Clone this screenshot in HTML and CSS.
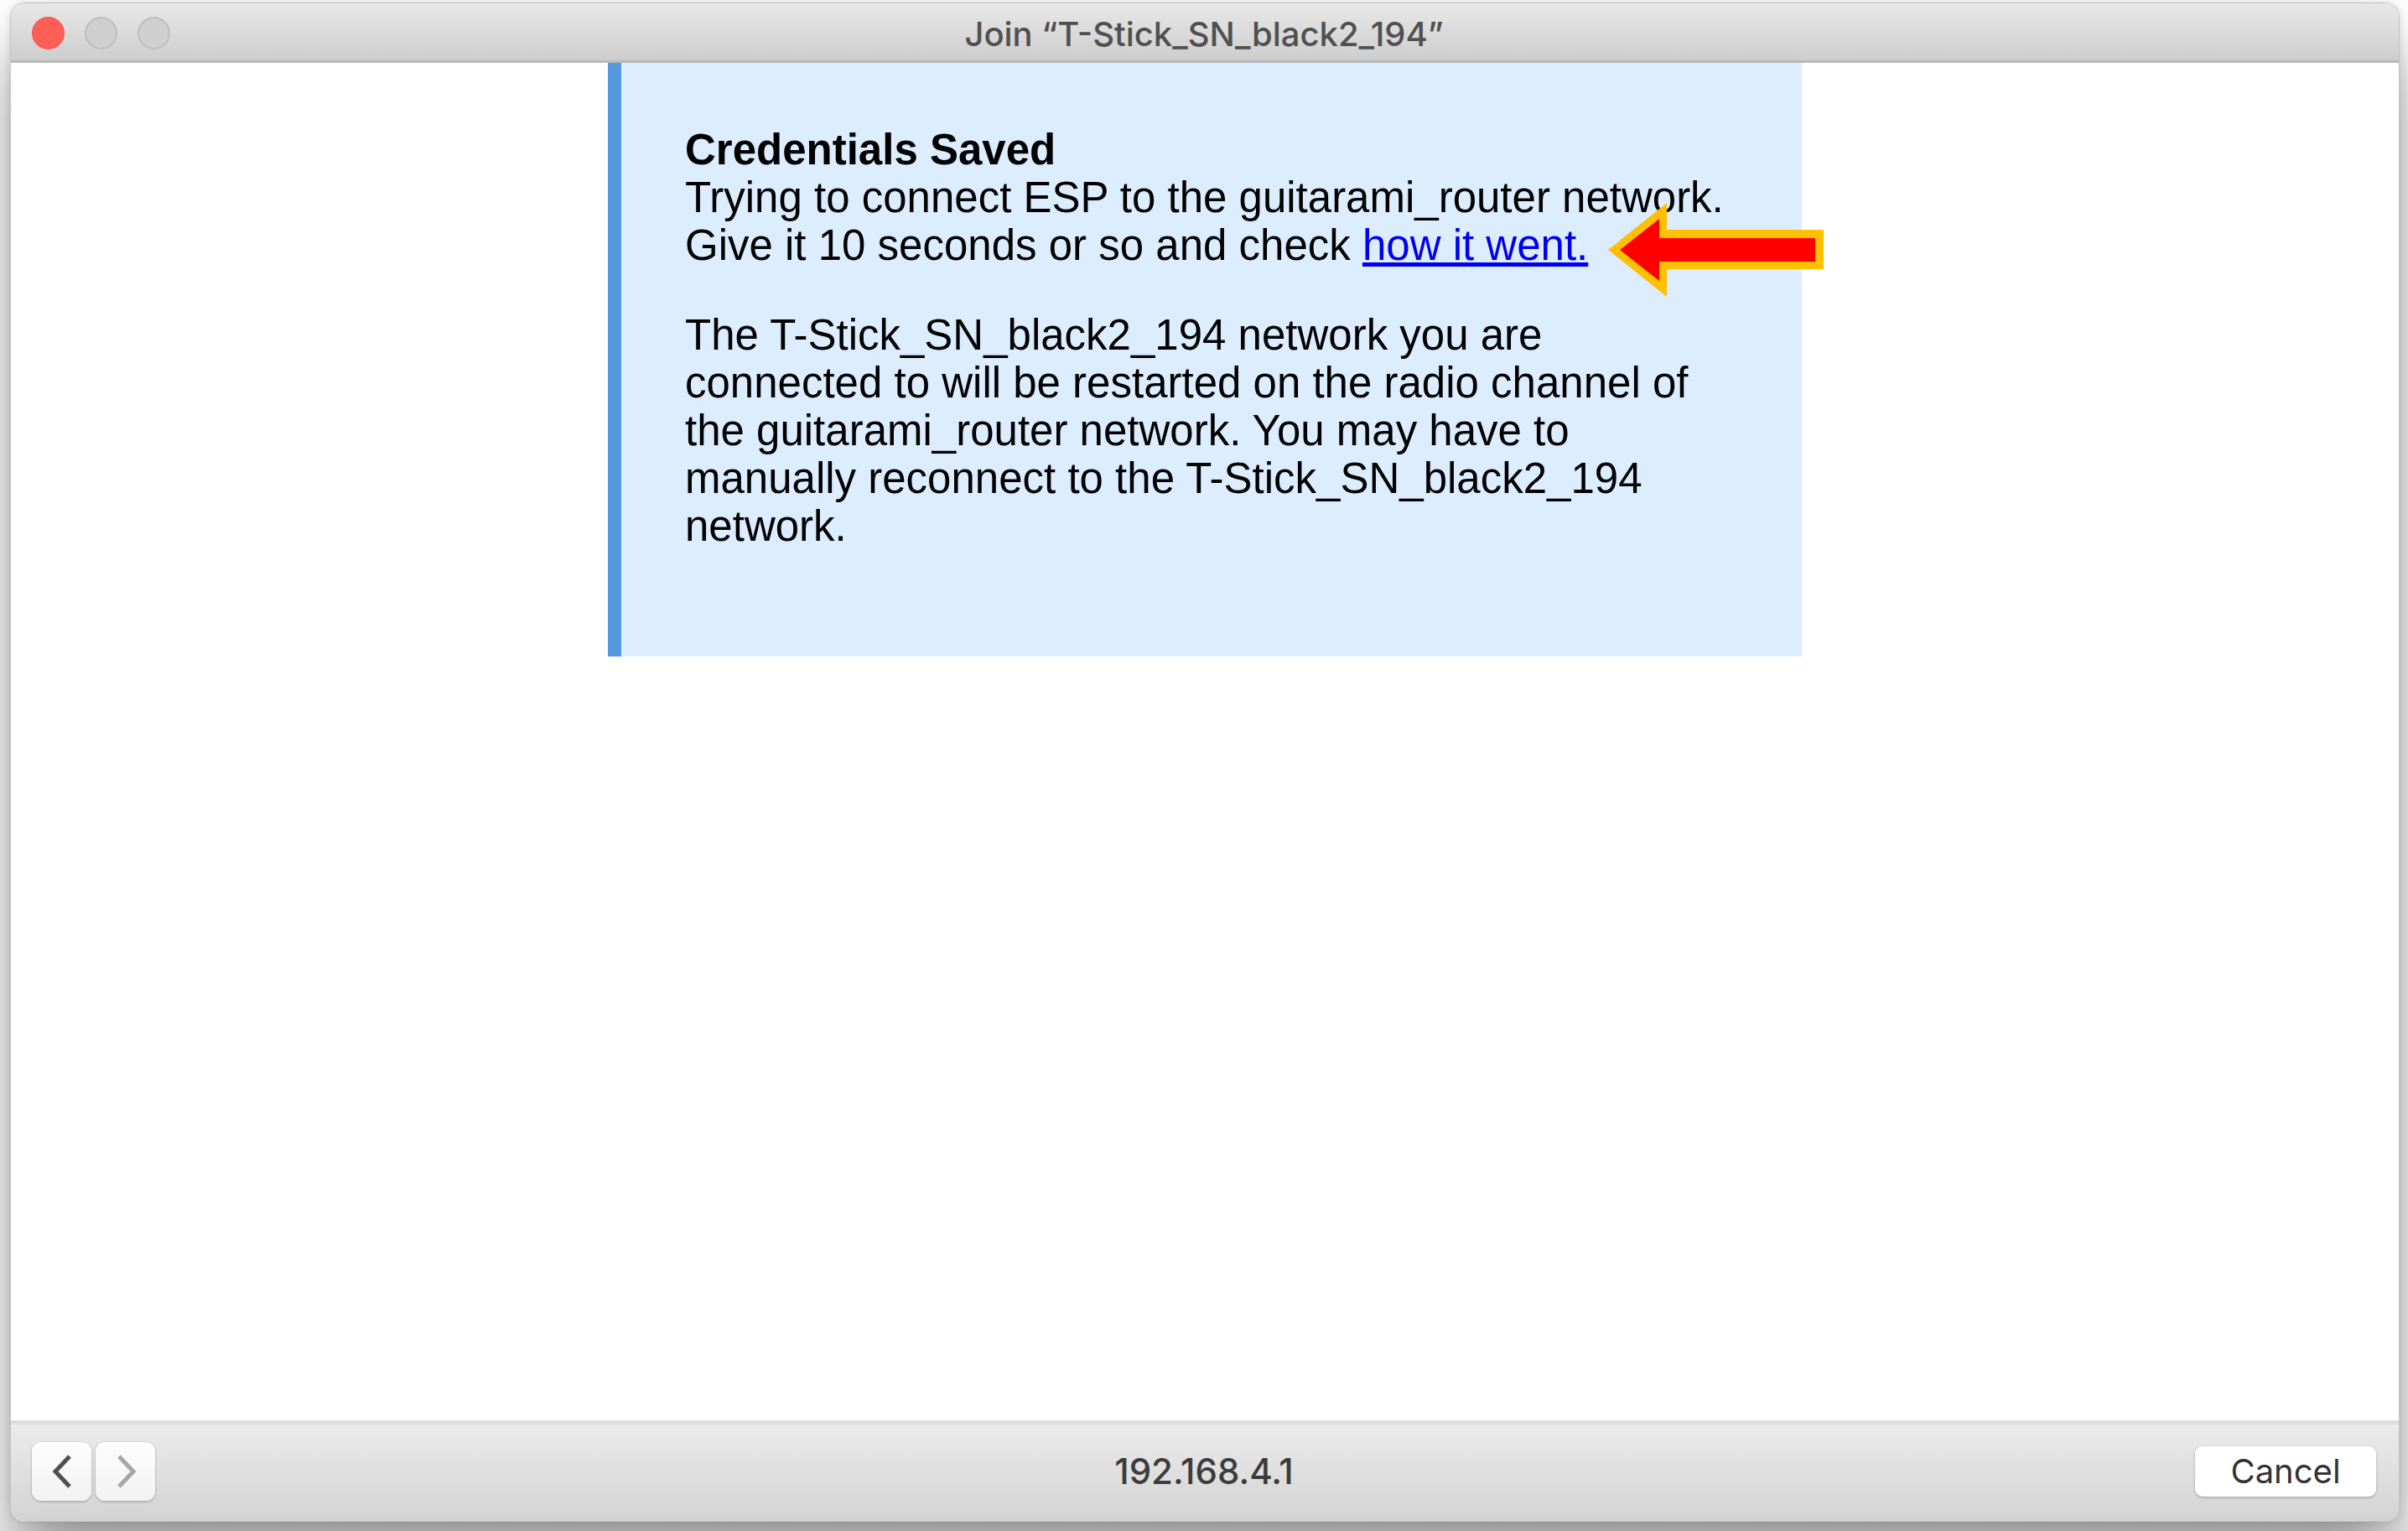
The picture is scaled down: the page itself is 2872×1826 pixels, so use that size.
FILE: index.html
```html
<!DOCTYPE html>
<html lang="en">
<head>
<meta charset="utf-8">
<title>Join “T-Stick_SN_black2_194”</title>
<link rel="stylesheet" href="styles.css">
</head>
<body>
<div class="window">
  <header class="titlebar">
    <div class="controls">
      <button class="light light-close" type="button" aria-label="Close"></button>
      <button class="light" type="button" aria-label="Minimize" disabled></button>
      <button class="light" type="button" aria-label="Zoom" disabled></button>
    </div>
    <h1 class="title">Join “T-Stick_SN_black2_194”</h1>
  </header>
  <main class="content">
    <section class="message">
      <h2 class="heading">Credentials Saved</h2>
      <p class="text">Trying to connect ESP to the guitarami_router network.<br>Give it 10 seconds or so and check <a class="link" href="#status">how it went.</a></p>
      <p class="text">The T-Stick_SN_black2_194 network you are connected to will be restarted on the radio channel of the guitarami_router network. You may have to manually reconnect to the T-Stick_SN_black2_194 network.</p>
      <svg class="arrow" viewBox="0 0 257 112" aria-hidden="true">
        <path fill="#ffc000" d="M0 56 70 0V32H257V79H70V112Z"/>
        <path fill="#ff0000" d="M14 56 61 19V42H247V70H61V93Z"/>
      </svg>
    </section>
  </main>
  <footer class="toolbar">
    <nav class="nav">
      <button class="nav-button" type="button" aria-label="Back">
        <svg class="chevron" viewBox="0 0 24 40"><path d="M21 2 4 20 21 38"/></svg>
      </button>
      <button class="nav-button" type="button" aria-label="Forward" disabled>
        <svg class="chevron" viewBox="0 0 24 40"><path d="M4 2 21 20 4 38"/></svg>
      </button>
    </nav>
    <span class="address">192.168.4.1</span>
    <button class="cancel" type="button">Cancel</button>
  </footer>
</div>
</body>
</html>
```
FILE: styles.css
```css
* {
  box-sizing: border-box;
}

body {
  margin: 0;
  padding: 3px 10px 11px 12px;
  min-height: 100vh;
  display: flex;
  background: #fff;
  font-family: Inter, "Liberation Sans", sans-serif;
  overflow: hidden;
}

.window {
  flex: 1;
  display: flex;
  flex-direction: column;
  border: 1px solid #c4c4c4;
  border-radius: 17px;
  overflow: hidden;
  background: #fff;
  box-shadow: 0 56px 80px rgba(0, 0, 0, 0.4), 0 0 10px rgba(0, 0, 0, 0.12);
}

.titlebar,
.toolbar {
  display: grid;
  grid-template-columns: 1fr auto 1fr;
  align-items: center;
  padding: 0 27px 0 25px;
}

.titlebar {
  height: 71px;
  padding-top: 2px;
  background: linear-gradient(#e8e8e8, #cdcdcd);
  border-bottom: 3px solid #b9b9b9;
}

.controls {
  display: flex;
  gap: 24px;
}

.light {
  width: 39px;
  height: 39px;
  padding: 0;
  border: 2px solid #bebebe;
  border-radius: 50%;
  background: #cfcfcf;
}

.light-close {
  border-color: #fb5a53;
  background: #ff5f57;
}

.title {
  margin: 0;
  padding-top: 4px;
  font-size: 40px;
  line-height: 48px;
  font-weight: 500;
  color: #505050;
}

.content {
  flex: 1;
}

.message {
  position: relative;
  width: 50%;
  margin: 0 auto;
  padding: 75px 76px 77px;
  border-left: 16px solid #5599de;
  background: #dcedff;
  color: #000;
  font-family: "Liberation Sans", Arial, sans-serif;
  font-size: 51px;
  line-height: 57px;
}

.heading {
  margin: 0;
  font-size: 51px;
  font-weight: 700;
}

.text {
  margin: 0 0 50px;
}

.link {
  color: #0000ee;
  text-decoration: underline;
}

.arrow {
  position: absolute;
  top: 167px;
  right: -26px;
  width: 257px;
  height: 112px;
}

.toolbar {
  height: 120px;
  padding-bottom: 4px;
  background: linear-gradient(#ebebeb, #d3d3d3);
  border-top: 5px solid #dedede;
}

.nav {
  display: flex;
  gap: 5px;
}

.nav-button,
.cancel {
  display: flex;
  align-items: center;
  justify-content: center;
  padding: 0;
  border: 0;
  box-shadow: 0 1px 3px rgba(0, 0, 0, 0.3);
}

.nav-button {
  width: 71px;
  height: 70px;
  border-radius: 11px;
  background: linear-gradient(#fdfdfd, #f2f2f2);
  color: #4f4f4f;
}

.nav-button:disabled {
  color: #a6a6a6;
}

.chevron {
  width: 24px;
  height: 40px;
  fill: none;
  stroke: currentColor;
  stroke-width: 5;
}

.address {
  font-size: 42px;
  line-height: 48px;
  font-weight: 500;
  color: #3c3c3c;
}

.cancel {
  justify-self: end;
  width: 216px;
  height: 60px;
  border-radius: 9px;
  background: #fff;
  font-family: inherit;
  font-size: 40px;
  line-height: 48px;
  color: #333;
}
```
